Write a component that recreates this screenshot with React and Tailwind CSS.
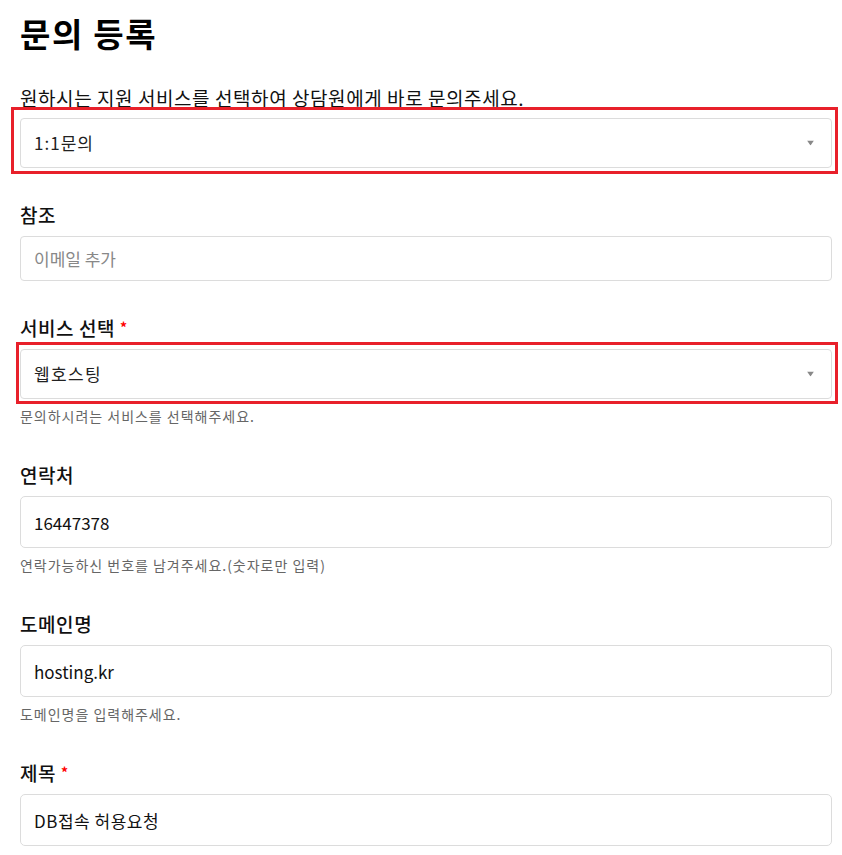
import { useState } from "react"

const font = { fontFamily: '"Noto Sans CJK KR", "Noto Sans", sans-serif' }

function Arrow() {
  return (
    <svg
      className="pointer-events-none absolute right-[18px] top-1/2 -translate-y-1/2"
      width="7"
      height="5"
      viewBox="0 0 7 5"
    >
      <path d="M0 0h7L3.5 5z" fill="#888" />
    </svg>
  )
}

function Label({ children, required }) {
  return (
    <label className="mb-2 block text-[19px] font-medium leading-[27px] tracking-[0.03em] text-[#111]">
      {children}
      {required && <span className="ml-[5px] align-top text-[14px] font-bold tracking-normal text-[#f00]">*</span>}
    </label>
  )
}

function Help({ children }) {
  return <p className="mt-[7px] text-[14px] leading-[21px] tracking-[0.07em] text-[#666]">{children}</p>
}

export default function App() {
  const [type, setType] = useState("1:1문의")
  const [service, setService] = useState("웹호스팅")
  const [cc, setCc] = useState("")
  const [phone, setPhone] = useState("16447378")
  const [domain, setDomain] = useState("hosting.kr")
  const [subject, setSubject] = useState("DB접속 허용요청")

  return (
    <div className="min-h-screen bg-white pl-5 pr-[10px] text-[#111]" style={font}>
      <h1 className="pt-[9px] text-[33px] font-bold leading-[48px] tracking-[0.05em] text-black">문의 등록</h1>

      <p className="mt-[27px] text-[19px] leading-[27px] tracking-[0.03em] text-[#111]">
        원하시는 지원 서비스를 선택하여 상담원에게 바로 문의주세요.
      </p>

      <div className="relative mt-[7px]">
        <div className="pointer-events-none absolute -left-[9px] -top-[11px] -right-[6px] -bottom-[6px] border-[3px] border-[#e8202a]" />
        <select
          value={type}
          onChange={(e) => setType(e.target.value)}
          className="h-[50px] w-full appearance-none rounded-[4px] border border-[#dcdcdc] bg-white pl-[13px] text-[17px] tracking-[0.06em] text-[#222] outline-none"
        >
          <option>1:1문의</option>
          <option>장애신고</option>
        </select>
        <Arrow />
      </div>

      <div className="mt-[33px]">
        <Label>참조</Label>
        <input
          value={cc}
          onChange={(e) => setCc(e.target.value)}
          placeholder="이메일 추가"
          className="h-[45px] w-full rounded-[4px] border border-[#dcdcdc] pl-[13px] text-[17px] text-[#222] outline-none placeholder:text-[#888]"
        />
      </div>

      <div className="mt-[33px]">
        <Label required>서비스 선택</Label>
        <div className="relative">
          <div className="pointer-events-none absolute -left-[4px] -top-[7px] -right-[6px] -bottom-[5px] border-[3px] border-[#e8202a]" />
          <select
            value={service}
            onChange={(e) => setService(e.target.value)}
            className="h-[50px] w-full appearance-none rounded-[4px] border border-[#dcdcdc] bg-white pl-[13px] text-[17px] tracking-[0.08em] text-[#222] outline-none"
          >
            <option>웹호스팅</option>
            <option>도메인</option>
            <option>서버호스팅</option>
          </select>
          <Arrow />
        </div>
        <Help>문의하시려는 서비스를 선택해주세요.</Help>
      </div>

      <div className="mt-[34px]">
        <Label>연락처</Label>
        <input
          value={phone}
          onChange={(e) => setPhone(e.target.value)}
          className="h-[52px] w-full rounded-[5px] border border-[#dcdcdc] pl-[13px] text-[17px] text-[#111] outline-none"
        />
        <Help>연락가능하신 번호를 남겨주세요.(숫자로만 입력)</Help>
      </div>

      <div className="mt-[34px]">
        <Label>도메인명</Label>
        <input
          value={domain}
          onChange={(e) => setDomain(e.target.value)}
          className="h-[52px] w-full rounded-[5px] border border-[#dcdcdc] pl-[13px] text-[17px] text-[#111] outline-none"
        />
        <Help>도메인명을 입력해주세요.</Help>
      </div>

      <div className="mt-[34px] pb-10">
        <Label required>제목</Label>
        <input
          value={subject}
          onChange={(e) => setSubject(e.target.value)}
          className="h-[52px] w-full rounded-[5px] border border-[#dcdcdc] pl-[13px] text-[17px] tracking-[0.03em] text-[#111] outline-none"
        />
      </div>
    </div>
  )
}
